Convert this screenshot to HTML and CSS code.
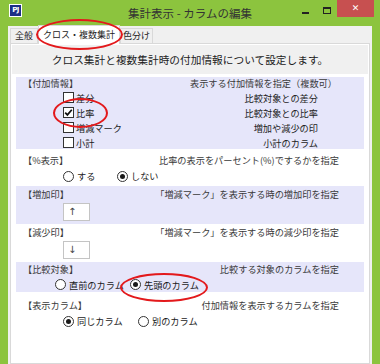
FILE: index.html
```html
<!DOCTYPE html>
<html lang="ja">
<head>
<meta charset="utf-8">
<title>集計表示 - カラムの編集</title>
<link rel="stylesheet" href="styles.css">
</head>
<body>
<div class="window">
  <header class="titlebar">
    <div class="tb-left"><span class="app-icon">PJ</span></div>
    <div class="title">集計表示 - カラムの編集</div>
    <div class="tb-controls">
      <span class="ctl ctl-min"><span class="min-bar"></span></span>
      <span class="ctl ctl-max"><span class="max-box"></span></span>
      <span class="ctl ctl-close">✕</span>
    </div>
  </header>
  <main class="client">
    <nav class="tabs">
      <span class="tab tab-general">全般</span>
      <span class="tab tab-active">クロス・複数集計</span>
      <span class="tab tab-color">色分け</span>
    </nav>
    <div class="panel">
      <div class="intro">クロス集計と複数集計時の付加情報について設定します。</div>
      <div class="sections">
        <section class="row lav row-extra">
          <div class="row-head"><span class="row-label">【付加情報】</span><span class="row-desc desc-extra">表示する付加情報を指定（複数可）</span></div>
          <ul class="check-list">
            <li class="check-item"><span class="checkbox"></span><span class="opt-label">差分</span><span class="item-desc">比較対象との差分</span></li>
            <li class="check-item"><span class="checkbox checked"><svg viewBox="0 0 11 11" width="11" height="11"><path d="M2.2 5.6 L4.4 7.9 L8.8 2.8" fill="none" stroke="#111" stroke-width="1.7"/></svg></span><span class="opt-label">比率</span><span class="item-desc">比較対象との比率</span></li>
            <li class="check-item"><span class="checkbox"></span><span class="opt-label">増減マーク</span><span class="item-desc">増加や減少の印</span></li>
            <li class="check-item"><span class="checkbox"></span><span class="opt-label">小計</span><span class="item-desc">小計のカラム</span></li>
          </ul>
        </section>
        <section class="row row-pct">
          <div class="row-head"><span class="row-label">【%表示】</span><span class="row-desc">比率の表示をパーセント(%)でするかを指定</span></div>
          <div class="radio-row indent-40">
            <span class="radio-opt w54"><span class="radio"></span><span class="opt-label">する</span></span>
            <span class="radio-opt"><span class="radio on"></span><span class="opt-label">しない</span></span>
          </div>
        </section>
        <section class="row lav row-mark">
          <div class="row-head"><span class="row-label">【増加印】</span><span class="row-desc">「増減マーク」を表示する時の増加印を指定</span></div>
          <div class="mark-input">↑</div>
        </section>
        <section class="row row-mark">
          <div class="row-head"><span class="row-label">【減少印】</span><span class="row-desc">「増減マーク」を表示する時の減少印を指定</span></div>
          <div class="mark-input">↓</div>
        </section>
        <section class="row lav row-target">
          <div class="row-head"><span class="row-label">【比較対象】</span><span class="row-desc">比較する対象のカラムを指定</span></div>
          <div class="radio-row indent-32">
            <span class="radio-opt w75"><span class="radio"></span><span class="opt-label">直前のカラム</span></span>
            <span class="radio-opt"><span class="radio on"></span><span class="opt-label">先頭のカラム</span></span>
          </div>
        </section>
        <section class="row row-col">
          <div class="row-head"><span class="row-label">【表示カラム】</span><span class="row-desc">付加情報を表示するカラムを指定</span></div>
          <div class="radio-row indent-40">
            <span class="radio-opt w75"><span class="radio on"></span><span class="opt-label">同じカラム</span></span>
            <span class="radio-opt"><span class="radio"></span><span class="opt-label">別のカラム</span></span>
          </div>
        </section>
      </div>
    </div>
  </main>
  <span class="mark mark-tab"></span>
  <span class="mark mark-ratio"></span>
  <span class="mark mark-first"></span>
</div>
</body>
</html>
```

FILE: styles.css
```css
html, body {
  margin: 0;
  padding: 0;
}
body {
  width: 380px;
  height: 364px;
  overflow: hidden;
  font-family: "Noto Sans CJK JP", "Noto Sans", sans-serif;
  color: #333;
  background: #8cc43e;
}
.window {
  position: relative;
  width: 380px;
  height: 364px;
  background: #8cc43e;
  display: flex;
  flex-direction: column;
}

/* title bar */
.titlebar {
  height: 26px;
  flex: none;
  display: grid;
  grid-template-columns: 1fr auto 1fr;
  align-items: start;
}
.tb-left {
  display: flex;
}
.app-icon {
  margin: 5px 0 0 10px;
  width: 11px;
  height: 11px;
  background: #1c2f86;
  color: #fff;
  font-family: "DejaVu Sans", sans-serif;
  font-weight: bold;
  font-size: 7px;
  line-height: 11px;
  letter-spacing: -0.6px;
  text-align: center;
  box-shadow: 0 0 0 1px #fff;
}
.title {
  padding-top: 5px;
  font-size: 11.5px;
  line-height: 16px;
  color: #333;
}
.tb-controls {
  display: flex;
  justify-content: flex-end;
  padding-right: 6px;
}
.ctl {
  height: 17px;
  display: flex;
  align-items: flex-start;
  justify-content: center;
}
.ctl-min { width: 21px; }
.ctl-max { width: 21px; }
.min-bar {
  margin-top: 12px;
  width: 7px;
  height: 2px;
  background: #222;
}
.max-box {
  margin-top: 7px;
  width: 8px;
  height: 7px;
  box-sizing: border-box;
  border: 1px solid #222;
  border-top-width: 2px;
}
.ctl-close {
  width: 37px;
  background: #c75050;
  color: #fff;
  font-family: "DejaVu Sans", sans-serif;
  font-size: 9px;
  font-weight: bold;
  line-height: 17px;
  align-items: center;
}

/* client */
.client {
  flex: 1;
  margin: 0 8px;
  background: #f0f0f0;
  display: flex;
  flex-direction: column;
}
.tabs {
  height: 17px;
  flex: none;
  display: flex;
  align-items: flex-end;
  padding-left: 2px;
  position: relative;
  z-index: 1;
}
.tab {
  box-sizing: border-box;
  height: 15px;
  border: 1px solid #d9d9d9;
  border-bottom: none;
  background: #f0f0f0;
  font-size: 9px;
  line-height: 14px;
  text-align: center;
  color: #222;
  white-space: nowrap;
}
.tab-general { width: 28px; }
.tab-color { width: 33px; }
.tab-active {
  width: 82px;
  height: 19px;
  margin-bottom: -1px;
  background: #fff;
  line-height: 18px;
}
.panel {
  flex: 1;
  margin: 0 2px;
  border: 1px solid #d9d9d9;
  background: #fff;
  padding: 1px;
}
.intro {
  height: 29px;
  background: #f0f0f0;
  font-size: 10.7px;
  line-height: 29px;
  text-align: center;
  color: #222;
}
.sections {
  margin: 3px 4px 0;
}
.row {
  padding: 0 25px 0 7px;
  font-size: 9.2px;
}
.lav {
  background: #e6e6fa;
}
.row-head {
  display: flex;
  justify-content: space-between;
  line-height: 14px;
  height: 14px;
}
.row-label { color: #3a3a3a; }
.row-desc { color: #3a3a3a; }
.desc-extra { padding-right: 2px; }

.row-extra {
  height: 72px;
}
.row-extra .row-head {
  height: 13px;
  line-height: 13px;
}
.check-list {
  list-style: none;
  margin: 0;
  padding: 0;
}
.check-item {
  display: flex;
  align-items: center;
  height: 15px;
  padding-left: 40px;
}
.checkbox {
  width: 11px;
  height: 11px;
  box-sizing: border-box;
  border: 1px solid #333;
  background: #fff;
  display: flex;
  align-items: center;
  justify-content: center;
  flex: none;
}
.checkbox svg {
  display: block;
  flex: none;
}
.opt-label {
  margin-left: 2px;
  color: #1a1a1a;
  white-space: nowrap;
}
.item-desc {
  margin-left: auto;
  padding-right: 21px;
  color: #222;
}

.radio-row {
  display: flex;
  align-items: center;
}
.indent-40 { padding-left: 40px; }
.indent-32 { padding-left: 32px; }
.radio-opt {
  display: flex;
  align-items: center;
}
.w54 { width: 54px; }
.w75 { width: 75px; }
.radio {
  width: 11px;
  height: 11px;
  box-sizing: border-box;
  border: 1px solid #333;
  border-radius: 50%;
  background: #fff;
  display: flex;
  align-items: center;
  justify-content: center;
  flex: none;
}
.radio.on::after {
  content: "";
  width: 5px;
  height: 5px;
  border-radius: 50%;
  background: #1a1a1a;
}
.radio-opt .opt-label { margin-left: 3px; }

.row-pct {
  padding-top: 4px;
  padding-bottom: 1px;
}
.row-pct .radio-row { height: 18px; }

.row-mark {
  padding-top: 1px;
  padding-bottom: 3px;
}
.mark-input {
  margin: 2px 0 0 40px;
  width: 27px;
  height: 18px;
  box-sizing: border-box;
  border: 1px solid #c4c4c4;
  background: #fff;
  font-size: 10px;
  line-height: 16px;
  padding-left: 4px;
  color: #444;
  font-family: "DejaVu Sans", sans-serif;
}

.row-target .row-head {
  height: 15px;
  line-height: 15px;
}
.row-target .radio-row { height: 15px; }

.row-col {
  padding-top: 6px;
}
.row-col .radio-row { height: 18px; }

/* red annotation ellipses */
.mark {
  position: absolute;
  box-sizing: border-box;
  border: 2px solid #e3191c;
  border-radius: 50%;
  z-index: 5;
}
.mark-tab {
  left: 36px;
  top: 19px;
  width: 87px;
  height: 31px;
}
.mark-ratio {
  left: 53px;
  top: 98px;
  width: 55px;
  height: 30px;
}
.mark-first {
  left: 120px;
  top: 273px;
  width: 88px;
  height: 29px;
}
```
